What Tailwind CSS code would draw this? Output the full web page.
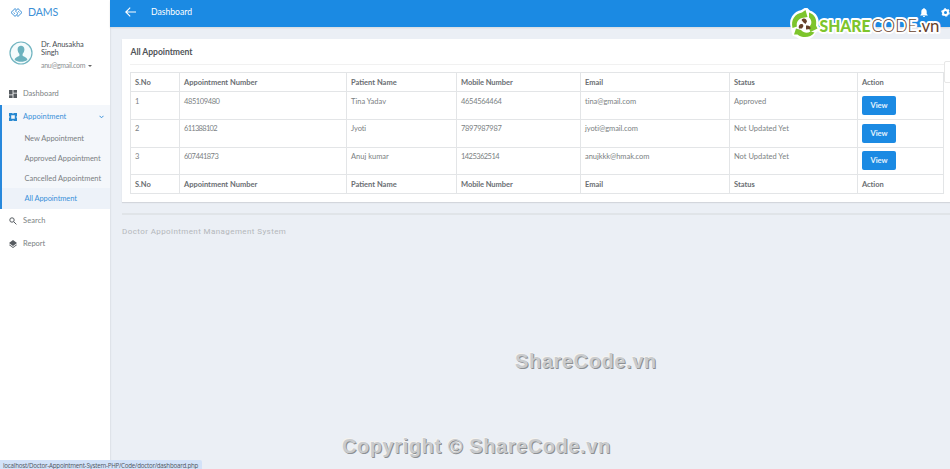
<!DOCTYPE html>
<html lang="en">
<head>
<meta charset="utf-8">
<title>DAMS - All Appointment</title>
<script src="https://cdn.jsdelivr.net/npm/@tailwindcss/browser@4"></script>
</head>
<body class="relative flex h-[469px] w-[950px] overflow-hidden bg-[#ebeff5] font-[Lato,sans-serif] text-[7.5px] leading-[10px] text-[#7b7f83]">
<aside class="flex w-[110px] shrink-0 flex-col bg-white shadow-[0_0_2px_rgba(0,0,0,0.15)]">
  <div class="flex h-[24px] items-center pl-[10px] text-[#3b8fd6]">
    <svg class="mr-[5px] h-[9px] w-[13px]" viewBox="0 0 13 9" fill="none" stroke="currentColor" stroke-width="1"><path d="M6.300 1.700 5 .6 1 4.500l4 3.900 3-2.900-1.700-1.600M3.600 4.500l1.300 1.200M6.700 7.300 8 8.400l4-3.900L8 .6 5 3.500M9.400 4.500 8.100 3.300"/></svg>
    <span class="text-[10.600px] tracking-[-0.1px]">DAMS</span>
  </div>
  <div class="flex h-[58px] pt-[17px] pl-[9px]">
    <svg class="mr-[8px] h-[24px] w-[24px]" viewBox="0 0 24 24"><circle cx="12" cy="12" r="11" fill="#f4fbfc" stroke="#72b5c1" stroke-width="1.2"/><path d="M8.600 8.600C8.600 6 10 4.800 12 4.800s3.400 1.200 3.400 3.800c0 1.900-.8 3.500-1.800 4.400v1.500c.4 1.200 4.200 1.300 4.800 4.200-3 2.700-9.800 2.700-12.800 0 .6-2.900 4.400-3 4.800-4.200V13c-1-.9-1.800-2.500-1.800-4.400z" fill="#6cb2be"/></svg>
    <div class="text-[#4b5055]">
      <div class="text-[7.500px] leading-[8px] tracking-[-0.08px]">Dr. Anusakha<br>Singh</div>
      <div class="mt-[4px] flex items-center text-[7px] leading-[9px] tracking-[-0.3px] text-[#8c8f92]">anu@gmail.com<span class="ml-[3px] border-x-[2px] border-t-[2px] border-x-transparent border-t-[#666]"></span></div>
    </div>
  </div>
  <nav class="flex flex-col">
    <a class="flex h-[23px] items-center pt-px pl-[9px]"><svg class="mr-[6px] h-[8px] w-[8px]" viewBox="0 0 8 8" fill="#565b60"><path d="M0 0h3.600v4.500H0zM4.400 0H8v2.800H4.400zM0 5.200h3.600V8H0zM4.400 3.500H8V8H4.400z"/></svg>Dashboard</a>
    <div class="flex h-[104px] flex-col border-l-2 border-[#2788dc] bg-[#f4f7fb]">
      <a class="flex h-[23px] items-center pl-[7px] text-[#3b91d9]"><svg class="mr-[6px] h-[8px] w-[8px]" viewBox="0 0 8 8"><path fill="#2788d0" fill-rule="evenodd" d="M0 0h3l1 .8L5 0h3v3l-.8 1L8 5v3H5l-1-.8L3 8H0V5l.8-1L0 3zM2.200 2.200v3.600h3.600V2.200z"/></svg><span>Appointment</span><svg class="mr-[6px] ml-auto h-[4px] w-[5px]" viewBox="0 0 5 4" fill="none" stroke="currentColor"><path d="m.5.8 2 2 2-2"/></svg></a>
      <a class="flex h-[20px] items-center pt-[2px] pl-[22.500px] tracking-[-0.05px]">New Appointment</a>
      <a class="flex h-[20px] items-center pt-[2px] pl-[22.500px] tracking-[-0.05px]">Approved Appointment</a>
      <a class="flex h-[20px] items-center pt-[2px] pl-[22.500px] tracking-[-0.02px]">Cancelled Appointment</a>
      <a class="flex flex-1 items-center bg-[#edf2f9] pl-[22.500px] tracking-[-0.08px] text-[#3b91d9]">All Appointment</a>
    </div>
    <a class="flex h-[22px] items-center pt-px pl-[9px] tracking-[0.08px]"><svg class="mr-[6px] h-[8px] w-[8px]" viewBox="0 0 8 8" fill="none" stroke="#565b60"><circle cx="3" cy="3" r="2.200"/><path d="m4.700 4.700 2.700 2.700"/></svg>Search</a>
    <a class="flex h-[23px] items-center pt-[2px] pl-[9px]"><svg class="mr-[6px] h-[8px] w-[8px]" viewBox="0 0 8 8" fill="#565b60"><path d="m4 0 4 3-4 3-4-3zM.7 4.400 4 6.900l3.300-2.500.7.500L4 8 0 4.900z"/></svg>Report</a>
  </nav>
</aside>
<main class="flex min-w-0 flex-1 flex-col">
  <header class="flex h-[27px] shrink-0 items-center bg-[#1b8ae3] pb-[3px] pl-[15px] text-white shadow-[0_1px_2px_rgba(0,0,0,0.1)]">
    <svg class="mr-[15px] h-[10px] w-[11px]" viewBox="0 0 11 10" fill="none" stroke="white" stroke-width="1.100"><path d="M11 5H1M5.200.6.8 5l4.400 4.400"/></svg>
    <span class="text-[8.600px]">Dashboard</span>
    <svg class="ml-auto h-[9px] w-[8px]" viewBox="0 0 8 9" fill="white"><path d="M4 0c.5 0 .7.400.7.800C6 1.200 6.700 2.300 6.700 3.700V6l1 1v.5H.3V7l1-1V3.700c0-1.400.7-2.500 2-2.900 0-.4.2-.8.7-.8zM3 8h2c0 1.300-2 1.300-2 0z"/></svg>
    <svg class="ml-[13px] h-[9px] w-[9px]" viewBox="0 0 9 9"><circle cx="4.500" cy="4.500" r="2.500" fill="none" stroke="white" stroke-width="2"/><circle cx="4.500" cy="4.500" r="3.700" fill="none" stroke="white" stroke-width="1.200" stroke-dasharray="1.940 1.940"/></svg>
  </header>
  <section class="mt-[12px] ml-[12px] flex h-[163px] flex-col bg-white pr-[6px] pl-[8px] shadow-[0_1px_1px_rgba(0,0,0,0.1)]">
    <h2 class="flex h-[26px] items-center border-b border-[#f1f1f1] pl-[0.500px] text-[8.600px] font-bold tracking-[-0.050px] text-[#505458]">All Appointment</h2>
    <div class="mt-[7px] grid h-[122px] w-[814px] grid-cols-[49px_167px_110px_124px_149px_128px_86px] grid-rows-[19px_28px_28px_27px_19px] border-t border-l border-[#e3e5e7] *:border-r *:border-b *:border-[#e3e5e7] *:pl-[4px]">
      <b class="pt-[5px] tracking-[-0.05px] text-[#6a6e72]">S.No</b><b class="pt-[5px] text-[#6a6e72]">Appointment Number</b><b class="pt-[5px] text-[#6a6e72]">Patient Name</b><b class="pt-[5px] tracking-[-0.06px] text-[#6a6e72]">Mobile Number</b><b class="pt-[5px] text-[#6a6e72]">Email</b><b class="pt-[5px] text-[#6a6e72]">Status</b><b class="pt-[5px] tracking-[-0.06px] text-[#6a6e72]">Action</b>
      <div class="pt-[5px]">1</div><div class="pt-[5px] tracking-[-0.4px]">485109480</div><div class="pt-[5px]">Tina Yadav</div><div class="pt-[5px] tracking-[-0.3px]">4654564464</div><div class="pt-[5px] tracking-[-0.05px]">tina@gmail.com</div><div class="pt-[5px]">Approved</div><div class="pt-[4px]"><button class="block h-[19px] w-[34px] rounded-[2px] bg-[#1b8ae3] text-center font-bold text-white/90">View</button></div>
      <div class="pt-[4px]">2</div><div class="pt-[4px] tracking-[-0.7px]">611388102</div><div class="pt-[4px] tracking-[-0.1px]">Jyoti</div><div class="pt-[4px] tracking-[-0.3px]">7897987987</div><div class="pt-[4px] tracking-[-0.05px]">jyoti@gmail.com</div><div class="pt-[4px]">Not Updated Yet</div><div class="pt-[4px]"><button class="block h-[19px] w-[34px] rounded-[2px] bg-[#1b8ae3] text-center font-bold text-white/90">View</button></div>
      <div class="pt-[4px]">3</div><div class="pt-[4px] tracking-[-0.550px]">607441873</div><div class="pt-[4px]">Anuj kumar</div><div class="pt-[4px] tracking-[-0.550px]">1425362514</div><div class="pt-[4px] tracking-[-0.050px]">anujkkk@hmak.com</div><div class="pt-[4px]">Not Updated Yet</div><div class="pt-[3px]"><button class="block h-[19px] w-[34px] rounded-[2px] bg-[#1b8ae3] text-center font-bold text-white/90">View</button></div>
      <b class="pt-[5px] tracking-[-0.05px] text-[#6a6e72]">S.No</b><b class="pt-[5px] text-[#6a6e72]">Appointment Number</b><b class="pt-[5px] text-[#6a6e72]">Patient Name</b><b class="pt-[5px] tracking-[-0.06px] text-[#6a6e72]">Mobile Number</b><b class="pt-[5px] text-[#6a6e72]">Email</b><b class="pt-[5px] text-[#6a6e72]">Status</b><b class="pt-[5px] tracking-[-0.06px] text-[#6a6e72]">Action</b>
    </div>
  </section>
  <footer class="mt-[11px] ml-[12px] border-t-2 border-[#e0e4e8] pt-[12px] font-[Roboto,sans-serif] text-[8px] tracking-[0.410px] text-[#b4b7bb]">Doctor Appointment Management System</footer>
</main>
<div class="absolute top-[61px] left-[944px] h-[22px] w-[8px] rounded-l-[2px] border border-[#e7e7e7] bg-white"></div>
<svg class="absolute top-[8px] left-[788px] h-[34px] w-[156px]" viewBox="0 0 156 34">
  <path d="M5 20C2 12 7 5 14 4l4-2.500 3 3C27 6 30 12 28.500 17.500l1 3.500-3.500 2.500C23 31 14 32 9 27l-3-1z" fill="white" stroke="white" stroke-width="4" stroke-linejoin="round"/>
  <path d="M4.500 20C2.500 12 7 5.500 14 4.500l3.500-2.500 2 7-5.500 1C10 11 8 15 9 18.500z" fill="#7dc52c"/>
  <path d="M21 4.500c6 2 8 7 7 13l1.500 3-7 3.500-2-4.500c4-3 3.500-7.500.5-10z" fill="#7dc52c"/>
  <path d="M26.500 24.500c-4 5.500-12 6-17 2L6 26.500l2-6 5 1.500c3 3 6 3.500 9.500 1.500z" fill="#7dc52c"/>
  <path d="M13.500 12c2-2.500 5-1.500 5.500 1.500l-1.500 2.500-2-1.500zM11 20.500c-1-3 1-5 3.500-4.500l1 2-1.500 2.500zM18 17.500c3-.5 5 1 4.500 3.500l-4.500.5z" fill="#67402a"/>
  <g font-family="Lato, sans-serif" font-size="17" paint-order="stroke" stroke="white" stroke-width="4" stroke-linejoin="round">
    <text x="130" y="23.500" font-weight="400" fill="#67402a" textLength="21.500" lengthAdjust="spacingAndGlyphs">.vn</text>
    <text x="83.500" y="23.500" font-weight="300" fill="#67402a" textLength="45.500" lengthAdjust="spacingAndGlyphs">CODE</text>
    <text x="31.500" y="23.500" font-weight="900" fill="#7dc52c" textLength="51" lengthAdjust="spacingAndGlyphs">SHARE</text>
  </g>
</svg>
<div class="absolute top-[349px] left-[515px] font-['Liberation_Sans',sans-serif] text-[20px] leading-[24px] font-bold tracking-[0.600px] whitespace-nowrap text-[#c9cbcd] [text-shadow:1px_1px_0_#8d9093,-1px_-1px_0_#f5f3ef]">ShareCode.vn</div>
<div class="absolute top-[434px] left-[342px] font-['Liberation_Sans',sans-serif] text-[20px] leading-[24px] font-bold tracking-[0.580px] whitespace-nowrap text-[#c9cbcd] [text-shadow:1px_1px_0_#8d9093,-1px_-1px_0_#f5f3ef]">Copyright © ShareCode.vn</div>
<div class="absolute top-[460px] left-0 h-[9px] w-[202px] rounded-tr-[2px] bg-[#d3e2f8] pl-[3px] font-['Open_Sans',sans-serif] text-[6.200px] leading-[11px] tracking-[-0.220px] whitespace-nowrap text-[#50565e]">localhost/Doctor-Appointment-System-PHP/Code/doctor/dashboard.php</div>
</body>
</html>
